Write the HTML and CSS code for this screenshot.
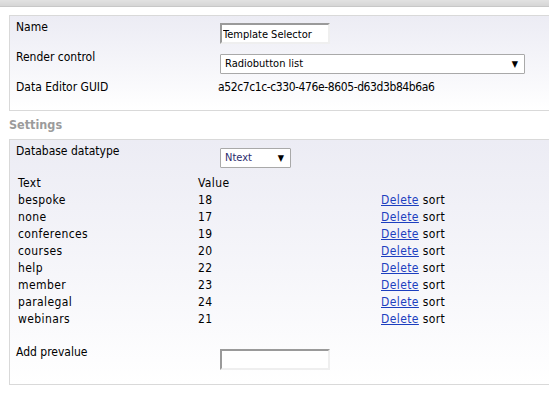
FILE: index.html
```html
<!DOCTYPE html>
<html>
<head>
<meta charset="utf-8">
<link rel="stylesheet" href="styles.css">
</head>
<body>
<div class="topbar"></div>
<div class="content">
  <div class="pane">
    <div class="prop">
      <div class="label">Name</div>
      <div class="field"><input class="txt" type="text" value="Template Selector"></div>
    </div>
    <div class="prop">
      <div class="label">Render control</div>
      <div class="field sel"><div class="select wide"><span>Radiobutton list</span><span class="arrow">▼</span></div></div>
    </div>
    <div class="prop">
      <div class="label">Data Editor GUID</div>
      <div class="guid">a52c7c1c-c330-476e-8605-d63d3b84b6a6</div>
    </div>
  </div>
  <h2 class="heading">Settings</h2>
  <div class="pane pane2">
    <div class="prop ddt">
      <div class="label">Database datatype</div>
      <div class="field sel"><div class="select narrow"><span>Ntext</span><span class="arrow">▼</span></div></div>
    </div>
    <table class="values">
      <tr><th>Text</th><th>Value</th><th></th></tr>
      <tr><td>bespoke</td><td>18</td><td><a href="#">Delete</a> sort</td></tr>
      <tr><td>none</td><td>17</td><td><a href="#">Delete</a> sort</td></tr>
      <tr><td>conferences</td><td>19</td><td><a href="#">Delete</a> sort</td></tr>
      <tr><td>courses</td><td>20</td><td><a href="#">Delete</a> sort</td></tr>
      <tr><td>help</td><td>22</td><td><a href="#">Delete</a> sort</td></tr>
      <tr><td>member</td><td>23</td><td><a href="#">Delete</a> sort</td></tr>
      <tr><td>paralegal</td><td>24</td><td><a href="#">Delete</a> sort</td></tr>
      <tr><td>webinars</td><td>21</td><td><a href="#">Delete</a> sort</td></tr>
    </table>
    <div class="prop addrow">
      <div class="label">Add prevalue</div>
      <div class="field sel"><input class="txt" type="text" value=""></div>
    </div>
  </div>
</div>
</body>
</html>
```
FILE: styles.css
```css
html, body { margin: 0; padding: 0; background: #fff; }
body {
  font-family: "DejaVu Sans Condensed", "DejaVu Sans", sans-serif;
  font-size: 12px;
  line-height: 14px;
  color: #000;
  width: 549px;
  height: 402px;
  overflow: hidden;
}
.topbar {
  height: 6px;
  background: linear-gradient(#e2e2e2, #d6d6d6);
  border-bottom: 1px solid #c8c8c8;
}
.content { padding: 8px 0 0 9px; }
.pane {
  border: 1px solid #d9d9d9;
  border-right: none;
  background: linear-gradient(#ececf4 0%, #f6f6fa 55%, #ffffff 100%);
  padding: 4px 0 0 6px;
}
.prop {
  display: flex;
  align-items: flex-start;
  height: 30px;
}
.label {
  width: 204px;
  color: #000;
}
.field { padding-top: 3px; }
.field.sel { padding-top: 4px; }
.txt {
  box-sizing: border-box;
  width: 110px;
  height: 21px;
  border-style: solid;
  border-width: 2px;
  border-color: #9a9a9a #efefef #efefef #9a9a9a;
  background: #fff;
  font-family: "DejaVu Sans Condensed", "DejaVu Sans", sans-serif;
  font-size: 11px;
  padding: 1px 1px 0;
  margin: 0;
  color: #000;
}
.select {
  box-sizing: border-box;
  height: 20px;
  border: 1px solid #a9a9a9;
  border-radius: 1px;
  background: #fff;
  display: flex;
  align-items: center;
  justify-content: space-between;
  padding: 0 6px 0 4px;
  font-size: 11px;
}
.select.wide { width: 305px; }
.select.narrow { width: 71px; color: #2b2b6e; }
.arrow { font-size: 9px; color: #000; }
.guid { letter-spacing: -0.4px; margin-left: -2px; }
.heading {
  margin: 0;
  font-size: 12.5px;
  line-height: 28px;
  height: 28px;
  font-weight: bold;
  color: #9b9b9b;
}
.ddt { height: 31px; }
.values {
  border-collapse: collapse;
  margin: 0 0 0 2px;
  letter-spacing: 0.4px;
}
.values th, .values td {
  font-weight: normal;
  text-align: left;
  padding: 0;
  height: 17px;
  line-height: 17px;
}
.values th:first-child, .values td:first-child { width: 180px; }
.values th:nth-child(2), .values td:nth-child(2) { width: 183px; }
.values a { color: #1d3fbf; }
.addrow { margin-top: 17px; height: 39px; }
```
